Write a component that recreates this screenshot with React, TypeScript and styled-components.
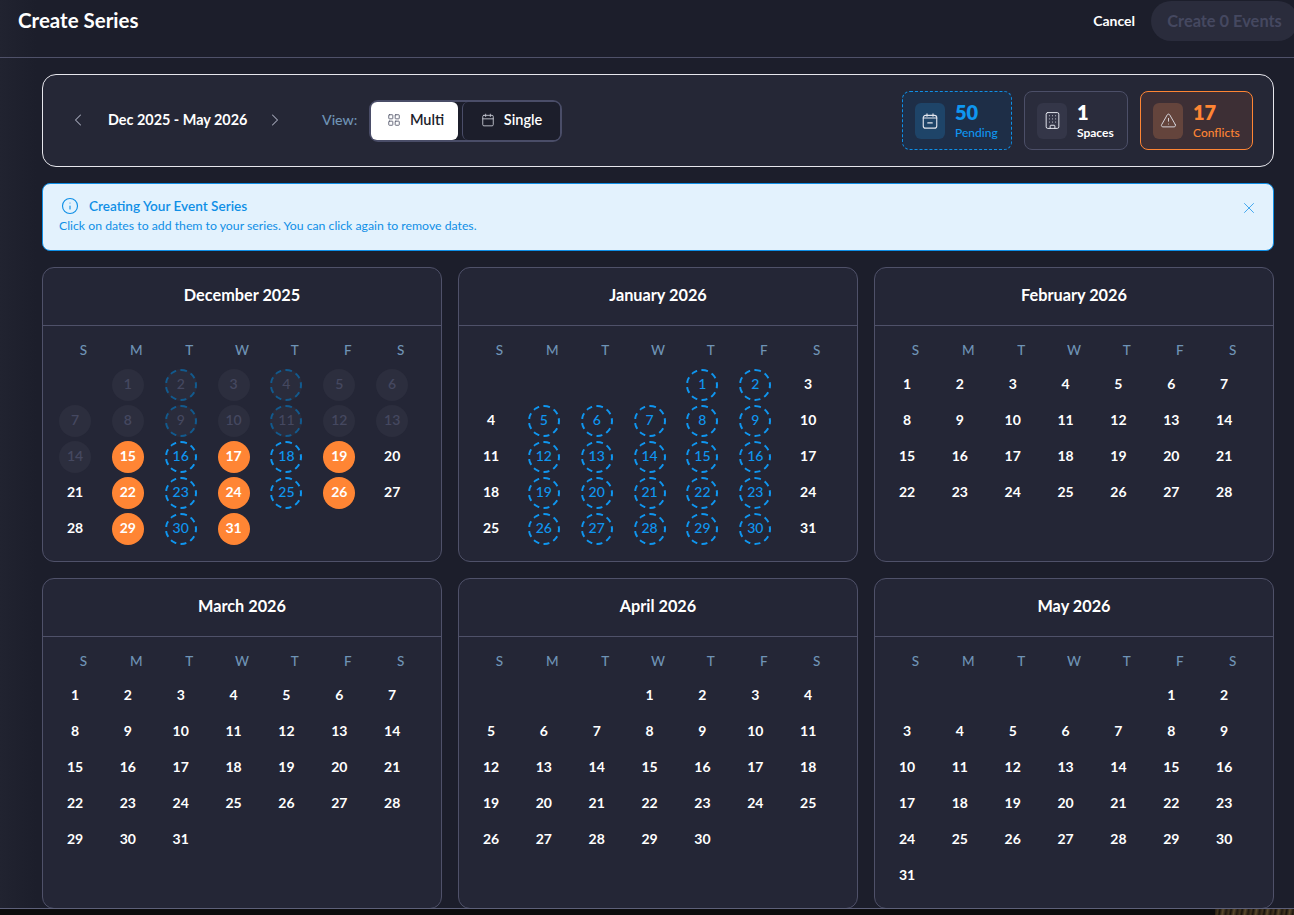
import React from "react";
import styled, { createGlobalStyle } from "styled-components";
import {
  Building,
  Calendar,
  ChevronLeft,
  ChevronRight,
  Info,
  LayoutGrid,
  TriangleAlert,
  X,
} from "lucide-react";

const GlobalStyle = createGlobalStyle`
  html, body {
    margin: 0;
    height: 100%;
    overflow: hidden;
    background: #0c0c0d;
    font-family: "Lato", "Noto Sans", sans-serif;
  }
`;

type Tone = "pending" | "neutral" | "conflict";
type DayKind = "normal" | "past" | "pastPending" | "pending" | "conflict";

const toneColors = {
  pending: { bg: "#1e2e47", border: "1px dashed #0f8fe6", box: "#1e4468", fg: "#0f96f0" },
  neutral: { bg: "#2a2c3c", border: "1px solid #4c4f68", box: "#343648", fg: "#ffffff" },
  conflict: { bg: "#3d2f35", border: "1px solid #ff8534", box: "#64443c", fg: "#ff8534" },
};

const Dialog = styled.div`
  height: 908px;
  display: flex;
  flex-direction: column;
  overflow: hidden;
  background: linear-gradient(90deg, #212330 0, #1c1e2b 36px);
  border-bottom: 1px solid #5d6079;
`;

const Header = styled.header`
  flex: none;
  height: 56px;
  padding: 1px 0 0 18px;
  display: flex;
  justify-content: space-between;
  align-items: flex-start;
  border-bottom: 1px solid #4f5169;
`;

const Title = styled.h1`
  margin: 0;
  font-size: 20.5px;
  line-height: 38px;
  font-weight: 700;
  color: #fff;
`;

const HeaderActions = styled.div`
  display: flex;
  align-items: center;
  gap: 16px;
  margin-right: -4px;
`;

const CancelButton = styled.button`
  border: 0;
  padding: 0 0 1px;
  background: none;
  font: 700 14px/38px "Lato", sans-serif;
  color: #fff;
`;

const CreateButton = styled.button`
  border: 0;
  width: 147px;
  height: 40px;
  border-radius: 20px;
  padding: 0 0 2px;
  background: #2a2c3c;
  color: #454860;
  font: 700 16.4px "Lato", sans-serif;
`;

const Content = styled.main`
  flex: 1;
  min-height: 0;
  padding: 16px 20px 0 42px;
  display: flex;
  flex-direction: column;
  gap: 16px;
`;

const Toolbar = styled.section`
  flex: none;
  height: 93px;
  box-sizing: border-box;
  display: flex;
  align-items: center;
  justify-content: space-between;
  padding: 0 20px 0 25px;
  background: #252736;
  border: 1px solid #e6e6ec;
  border-radius: 14px;
`;

const ToolbarLeft = styled.div`
  display: flex;
  align-items: center;
`;

const NavButton = styled.span`
  display: flex;
  margin-bottom: 2px;
  color: #a9acbd;
`;

const Range = styled.span`
  width: 140px;
  margin: 0 17px 2px 20px;
  font-size: 14.4px;
  font-weight: 700;
  color: #fff;
  white-space: nowrap;
`;

const ViewLabel = styled.span`
  width: 36px;
  margin: 0 11px 2px 37px;
  font-size: 14.2px;
  font-weight: 500;
  color: #6f93b5;
`;

const ViewToggle = styled.div`
  display: flex;
  gap: 4px;
  height: 42px;
  box-sizing: border-box;
  border: 2px solid #4a4d68;
  border-radius: 9px;
  background: #1c1e2b;
`;

const ViewButton = styled.button<{ $active?: boolean }>`
  box-sizing: border-box;
  display: flex;
  align-items: center;
  justify-content: center;
  gap: 9px;
  width: ${(p) => (p.$active ? "87px" : "98px")};
  padding: 0 0 2px ${(p) => (p.$active ? "2px" : "0")};
  border: 0;
  border-left: ${(p) => (p.$active ? "0" : "1px solid #4a4d68")};
  border-radius: 6px;
  background: ${(p) => (p.$active ? "#fff" : "#1c1e2b")};
  color: ${(p) => (p.$active ? "#1c1e2b" : "#fff")};
  font: 600 14.5px "Lato", sans-serif;
  svg {
    color: ${(p) => (p.$active ? "#55586c" : "#c9cbd6")};
  }
`;

const Stats = styled.div`
  display: flex;
  gap: 12px;
`;

const StatCard = styled.div<{ $tone: Tone; $width: number }>`
  box-sizing: border-box;
  width: ${(p) => p.$width}px;
  height: 59px;
  display: flex;
  align-items: center;
  gap: 10px;
  padding-left: 12px;
  border-radius: 8px;
  background: ${(p) => toneColors[p.$tone].bg};
  border: ${(p) => toneColors[p.$tone].border};
`;

const StatIcon = styled.div<{ $tone: Tone }>`
  width: 30px;
  height: 36px;
  display: flex;
  align-items: center;
  justify-content: center;
  border-radius: 6px;
  background: ${(p) => toneColors[p.$tone].box};
  color: #e4e6ee;
`;

const StatText = styled.div<{ $tone: Tone }>`
  display: flex;
  flex-direction: column;
  color: ${(p) => toneColors[p.$tone].fg};
`;

const StatValue = styled.span`
  font-size: 20px;
  line-height: 24px;
  font-weight: 800;
`;

const StatLabel = styled.span<{ $strong?: boolean }>`
  font-size: 12px;
  line-height: 18px;
  font-weight: ${(p) => (p.$strong ? 700 : 500)};
`;

const Alert = styled.section`
  flex: none;
  height: 68px;
  box-sizing: border-box;
  display: flex;
  justify-content: space-between;
  align-items: flex-start;
  padding: 13px 15px 0 16px;
  background: #e3f2fd;
  border: 1px solid #0f8fe6;
  border-radius: 8px;
  color: #0f8fe6;
`;

const AlertBody = styled.div`
  display: flex;
  flex-direction: column;
  gap: 4px;
`;

const AlertHeading = styled.div`
  display: flex;
  align-items: center;
  gap: 10px;
  padding-left: 2px;
  font-size: 13.6px;
  line-height: 18px;
  font-weight: 600;
`;

const AlertText = styled.div`
  font-size: 12.25px;
  line-height: 14px;
`;

const CloseIcon = styled(X)`
  margin-top: 2px;
  color: #3aa3ee;
`;

const MonthGrid = styled.div`
  display: grid;
  grid-template-columns: repeat(3, 1fr);
  grid-template-rows: 295px 331px;
  gap: 16px;
`;

const MonthCard = styled.article`
  box-sizing: border-box;
  background: #242636;
  border: 1px solid #4f5169;
  border-radius: 12px;
`;

const MonthTitle = styled.h2`
  margin: 0;
  height: 57px;
  line-height: 53px;
  text-align: center;
  font-size: 16.3px;
  font-weight: 700;
  color: #fff;
  border-bottom: 1px solid #4f5169;
`;

const MonthBody = styled.div`
  padding: 16px 14px;
`;

const Weekdays = styled.div`
  display: grid;
  grid-template-columns: repeat(7, 1fr);
  margin-bottom: 11px;
`;

const Weekday = styled.span`
  text-align: center;
  font-size: 13.5px;
  line-height: 16px;
  font-weight: 500;
  color: #6f93b5;
`;

const Days = styled.div`
  display: grid;
  grid-template-columns: repeat(7, 1fr);
  row-gap: 4px;
`;

const dayStyles: Record<DayKind, string> = {
  normal: "color:#fff;font-weight:700;",
  past: "color:#454860;background:#2c2e3e;font-weight:600;",
  pastPending: "color:#454860;background:#2a2c3c;border:2px dashed #125a8e;font-weight:500;",
  pending: "color:#0f96f0;border:2px dashed #0f96f0;font-weight:500;",
  conflict: "color:#fff;background:#ff8534;font-weight:700;",
};

const Day = styled.span<{ $kind: DayKind; $start?: number }>`
  box-sizing: border-box;
  width: 32px;
  height: 32px;
  margin-left: 2px;
  padding-bottom: 3px;
  border-radius: 50%;
  display: flex;
  align-items: center;
  justify-content: center;
  font-size: 14px;
  grid-column-start: ${(p) => p.$start ?? "auto"};
  ${(p) => dayStyles[p.$kind]}
`;

const Strip = styled.div`
  height: 6px;
  display: flex;
  justify-content: flex-end;
`;

const Photo = styled.div`
  width: 79px;
  background: repeating-linear-gradient(
    100deg,
    #1d170f 0,
    #43351f 3px,
    #16120c 5px,
    #5a4a2c 8px,
    #241c12 11px
  );
`;

const weekdays = ["S", "M", "T", "W", "T", "F", "S"];

const months = [
  { name: "December 2025", start: 1, days: 31 },
  { name: "January 2026", start: 4, days: 31 },
  { name: "February 2026", start: 0, days: 28 },
  { name: "March 2026", start: 0, days: 31 },
  { name: "April 2026", start: 3, days: 30 },
  { name: "May 2026", start: 5, days: 31 },
];

const decPending = [2, 4, 9, 11, 16, 18, 23, 25, 30];
const decConflict = [15, 17, 19, 22, 24, 26, 29, 31];
const janPending = [1, 2, 5, 6, 7, 8, 9, 12, 13, 14, 15, 16, 19, 20, 21, 22, 23, 26, 27, 28, 29, 30];

function dayKind(monthIndex: number, day: number): DayKind {
  if (monthIndex === 0) {
    if (decConflict.includes(day)) return "conflict";
    if (decPending.includes(day)) return day < 15 ? "pastPending" : "pending";
    return day < 15 ? "past" : "normal";
  }
  if (monthIndex === 1 && janPending.includes(day)) return "pending";
  return "normal";
}

function PendingIcon() {
  return (
    <svg width="18" height="18" viewBox="0 0 24 24" fill="none" stroke="currentColor" strokeWidth="1.5" strokeLinecap="round">
      <rect x="3" y="4.5" width="18" height="17" rx="3" />
      <path d="M8 2.5v3M16 2.5v3M3 8h18M9 14.5h6" />
    </svg>
  );
}

function App() {
  return (
    <>
      <GlobalStyle />
      <Dialog>
        <Header>
          <Title>Create Series</Title>
          <HeaderActions>
            <CancelButton>Cancel</CancelButton>
            <CreateButton disabled>Create 0 Events</CreateButton>
          </HeaderActions>
        </Header>
        <Content>
          <Toolbar>
            <ToolbarLeft>
              <NavButton>
                <ChevronLeft size={20} strokeWidth={1.25} />
              </NavButton>
              <Range>Dec 2025 - May 2026</Range>
              <NavButton>
                <ChevronRight size={20} strokeWidth={1.25} />
              </NavButton>
              <ViewLabel>View:</ViewLabel>
              <ViewToggle>
                <ViewButton $active>
                  <LayoutGrid size={14} strokeWidth={1.5} />
                  Multi
                </ViewButton>
                <ViewButton>
                  <Calendar size={14} strokeWidth={1.5} />
                  Single
                </ViewButton>
              </ViewToggle>
            </ToolbarLeft>
            <Stats>
              <StatCard $tone="pending" $width={110}>
                <StatIcon $tone="pending">
                  <PendingIcon />
                </StatIcon>
                <StatText $tone="pending">
                  <StatValue>50</StatValue>
                  <StatLabel>Pending</StatLabel>
                </StatText>
              </StatCard>
              <StatCard $tone="neutral" $width={104}>
                <StatIcon $tone="neutral">
                  <Building size={19} strokeWidth={1.25} />
                </StatIcon>
                <StatText $tone="neutral">
                  <StatValue>1</StatValue>
                  <StatLabel $strong>Spaces</StatLabel>
                </StatText>
              </StatCard>
              <StatCard $tone="conflict" $width={113}>
                <StatIcon $tone="conflict">
                  <TriangleAlert size={17} strokeWidth={1.25} />
                </StatIcon>
                <StatText $tone="conflict">
                  <StatValue>17</StatValue>
                  <StatLabel>Conflicts</StatLabel>
                </StatText>
              </StatCard>
            </Stats>
          </Toolbar>
          <Alert>
            <AlertBody>
              <AlertHeading>
                <Info size={18} strokeWidth={1.5} />
                Creating Your Event Series
              </AlertHeading>
              <AlertText>Click on dates to add them to your series. You can click again to remove dates.</AlertText>
            </AlertBody>
            <CloseIcon size={18} strokeWidth={1.25} />
          </Alert>
          <MonthGrid>
            {months.map((month, monthIndex) => (
              <MonthCard key={month.name}>
                <MonthTitle>{month.name}</MonthTitle>
                <MonthBody>
                  <Weekdays>
                    {weekdays.map((w, i) => (
                      <Weekday key={i}>{w}</Weekday>
                    ))}
                  </Weekdays>
                  <Days>
                    {Array.from({ length: month.days }, (_, i) => (
                      <Day
                        key={i}
                        $kind={dayKind(monthIndex, i + 1)}
                        $start={i === 0 ? month.start + 1 : undefined}
                      >
                        {i + 1}
                      </Day>
                    ))}
                  </Days>
                </MonthBody>
              </MonthCard>
            ))}
          </MonthGrid>
        </Content>
      </Dialog>
      <Strip>
        <Photo />
      </Strip>
    </>
  );
}

export default App;
